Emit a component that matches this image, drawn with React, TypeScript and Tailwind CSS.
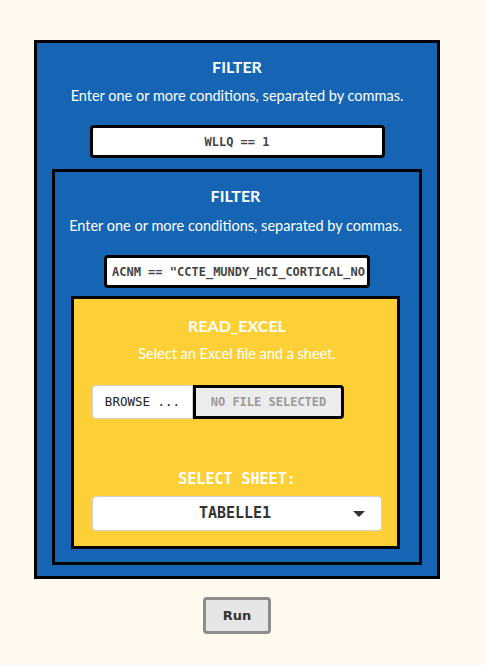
import React from "react";

const sans = { fontFamily: "Lato, 'Noto Sans', sans-serif" };
const mono = { fontFamily: "'DejaVu Sans Mono', 'Liberation Mono', monospace" };

export default function App() {
  return (
    <div className="min-h-[665px] w-[486px] bg-[#fefaf0] pt-[40px]">
      <div
        className="ml-[34px] w-[406px] border-[3px] border-black bg-[#1565b4] pt-[14px] pl-[15px] pr-[15px] pb-[11px] flex flex-col items-center"
        style={sans}
      >
        <div className="text-[16px] leading-[20px] font-bold text-white">FILTER</div>
        <div className="mt-[10px] text-[14.5px] leading-[18px] text-white whitespace-nowrap">
          Enter one or more conditions, separated by commas.
        </div>
        <div
          className="mt-[20px] w-[295px] h-[33px] border-[3px] border-black rounded-[4px] bg-white flex items-center justify-center text-[12px] font-bold text-[#444]"
          style={mono}
        >
          WLLQ == 1
        </div>

        <div className="mt-[11px] w-full border-[3px] border-black bg-[#1565b4] pt-[14px] pl-[16px] pr-[19px] pb-[13px] flex flex-col items-center">
          <div className="text-[16px] leading-[20px] font-bold text-white">FILTER</div>
          <div className="mt-[11px] text-[14.5px] leading-[18px] text-white whitespace-nowrap">
            Enter one or more conditions, separated by commas.
          </div>
          <div
            className="mt-[20px] ml-[3px] w-[266px] h-[33px] border-[3px] border-black rounded-[4px] bg-white flex items-center px-[5px] overflow-hidden whitespace-nowrap text-[12px] font-bold text-[#444]"
            style={mono}
          >
            ACNM == "CCTE_MUNDY_HCI_CORTICAL_NO
          </div>

          <div className="mt-[8px] w-full border-[3px] border-black bg-[#fdd037] pt-[17px] pl-[18px] pr-[15px] pb-[15px] flex flex-col">
            <div className="self-center text-[16px] leading-[20px] font-bold text-white">READ_EXCEL</div>
            <div className="self-center mt-[9px] text-[14.5px] leading-[18px] text-white whitespace-nowrap">
              Select an Excel file and a sheet.
            </div>
            <div className="mt-[22px] flex h-[34px]" style={mono}>
              <div className="w-[101px] h-full bg-white border border-[#d0d0d0] rounded-l-[4px] flex items-center justify-center text-[12.5px] text-[#222]">
                BROWSE ...
              </div>
              <div className="w-[151px] h-full bg-[#ececec] border-[3px] border-black rounded-r-[4px] flex items-center justify-center text-[12px] font-bold text-[#999]">
                NO FILE SELECTED
              </div>
            </div>
            <div
              className="self-center mt-[51px] text-[15px] leading-[18px] font-bold text-white"
              style={mono}
            >
              SELECT SHEET:
            </div>
            <div className="mt-[8px] relative h-[35px] bg-white border border-[#d0d0d0] rounded-[4px] flex items-center justify-center" style={mono}>
              <span className="text-[15px] font-bold text-[#333] -ml-[4px]">TABELLE1</span>
              <svg className="absolute right-[16px] top-[14px]" width="12" height="6" viewBox="0 0 12 6">
                <path d="M0 0 L12 0 L6 6 Z" fill="#333" />
              </svg>
            </div>
          </div>
        </div>
      </div>
      <div className="ml-[203px] mt-[18px] w-[68px] h-[37px] border-[3px] border-[#8c8c8c] rounded-[4px] bg-[#e6e6e6] flex items-center justify-center text-[13px] font-bold text-[#333]" style={{ fontFamily: "'DejaVu Sans', sans-serif" }}>
        Run
      </div>
    </div>
  );
}
